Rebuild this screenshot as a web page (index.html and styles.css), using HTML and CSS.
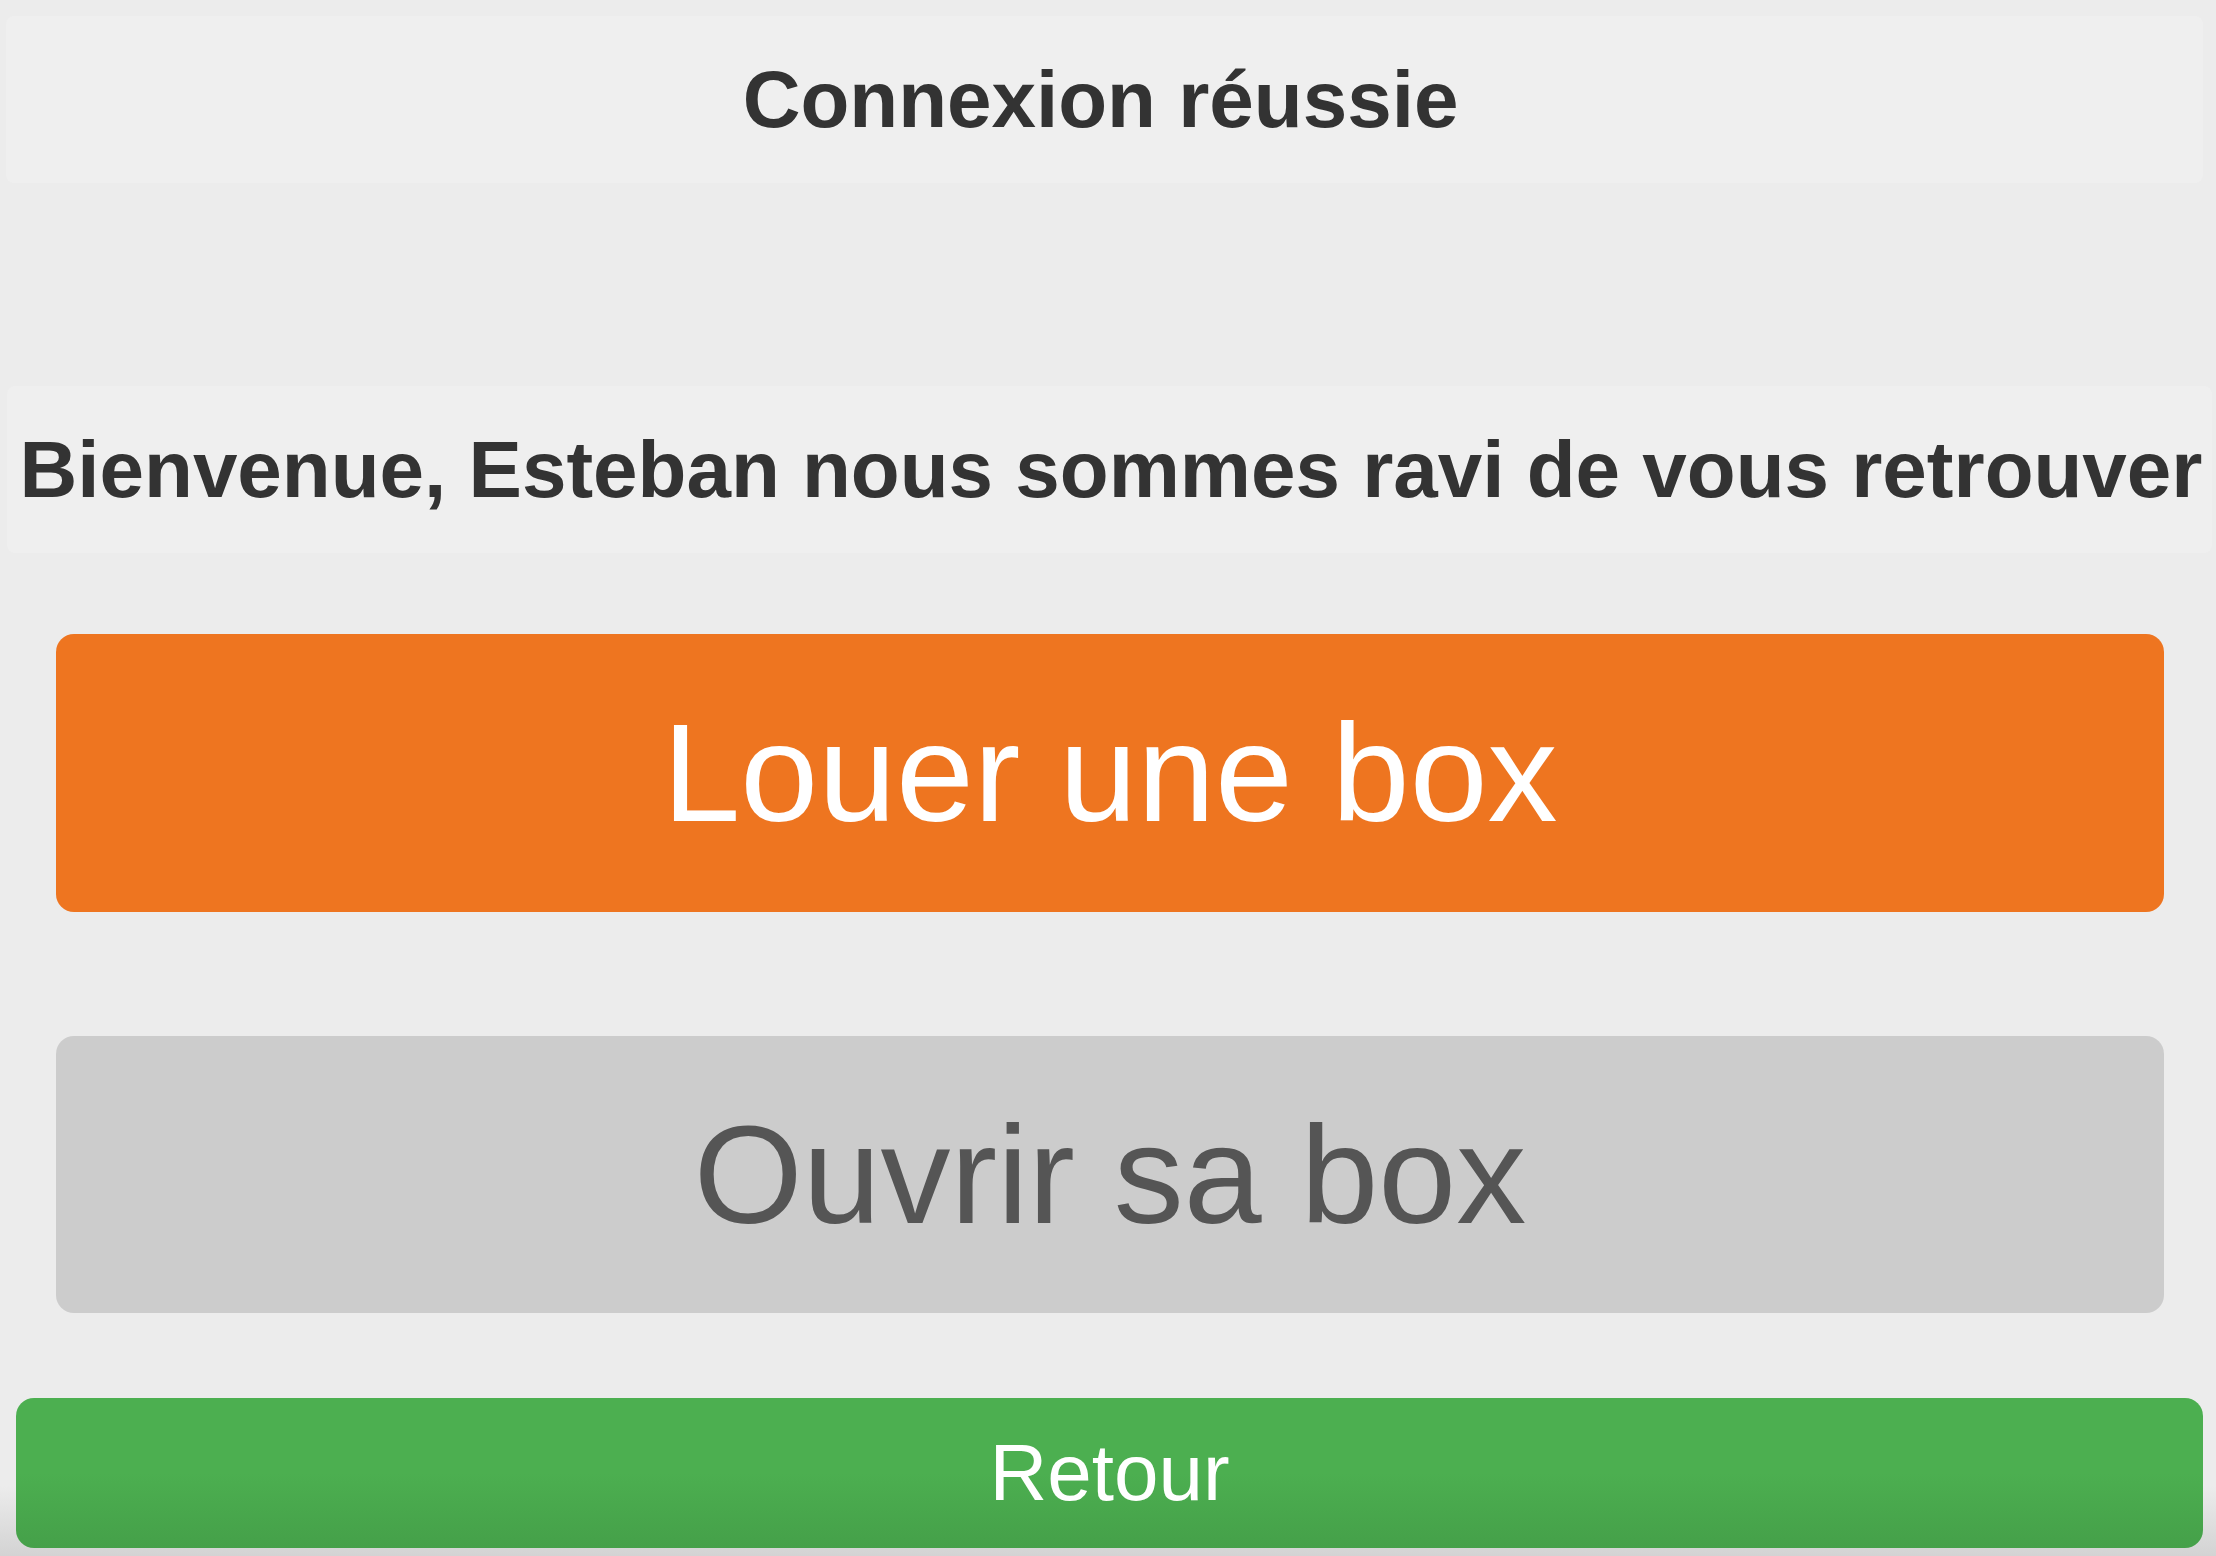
FILE: index.html
```html
<!DOCTYPE html>
<html lang="fr">
<head>
<meta charset="utf-8">
<title>Connexion réussie</title>
<link rel="stylesheet" href="styles.css">
</head>
<body>
<main class="page">
  <header class="banner banner-title">
    <h1 class="banner-text">Connexion réussie</h1>
  </header>
  <section class="banner banner-welcome">
    <h2 class="banner-text">Bienvenue, Esteban nous sommes ravi de vous retrouver</h2>
  </section>
  <div class="actions">
    <button class="action action-primary" type="button">Louer une box</button>
    <button class="action action-secondary" type="button">Ouvrir sa box</button>
  </div>
  <button class="back" type="button">Retour</button>
</main>
</body>
</html>
```

FILE: styles.css
```css
html, body {
  margin: 0;
  padding: 0;
}

body {
  min-height: 100vh;
  background: linear-gradient(to bottom, #ececec 0, #ececec calc(100% - 70px), #d3d3d3 100%);
  font-family: "Liberation Sans", Arial, sans-serif;
  color: #333333;
}

.page {
  display: flex;
  flex-direction: column;
  padding-top: 16px;
}

.banner {
  display: flex;
  align-items: center;
  justify-content: center;
  background: #efefef;
  border-radius: 8px;
  height: 167px;
  box-sizing: border-box;
}

.banner-title {
  margin: 0 13px 0 6px;
  padding-right: 8px;
}

.banner-welcome {
  margin: 203px 4px 0 7px;
  padding-left: 3px;
}

.banner-text {
  margin: 0;
  font-size: 80px;
  font-weight: bold;
  line-height: 1;
  white-space: nowrap;
  color: #333333;
}

.actions {
  display: flex;
  flex-direction: column;
  gap: 124px;
  margin: 81px 52px 0 56px;
}

.action {
  display: flex;
  align-items: center;
  justify-content: center;
  border: none;
  border-radius: 18px;
  font-family: "Liberation Sans", Arial, sans-serif;
  font-size: 140px;
  line-height: 1;
  padding: 0;
  cursor: pointer;
}

.action-primary {
  height: 278px;
  background: #ee7520;
  color: #ffffff;
}

.action-secondary {
  height: 277px;
  background: #cccccc;
  color: #555555;
}

.back {
  display: flex;
  align-items: center;
  justify-content: center;
  margin: 85px 13px 0 16px;
  height: 150px;
  border: none;
  border-radius: 18px;
  background: linear-gradient(to bottom, #4caf50 0%, #4caf50 50%, #45a049 100%);
  color: #ffffff;
  font-family: "Liberation Sans", Arial, sans-serif;
  font-size: 80px;
  line-height: 1;
  padding: 0;
  cursor: pointer;
}
```
